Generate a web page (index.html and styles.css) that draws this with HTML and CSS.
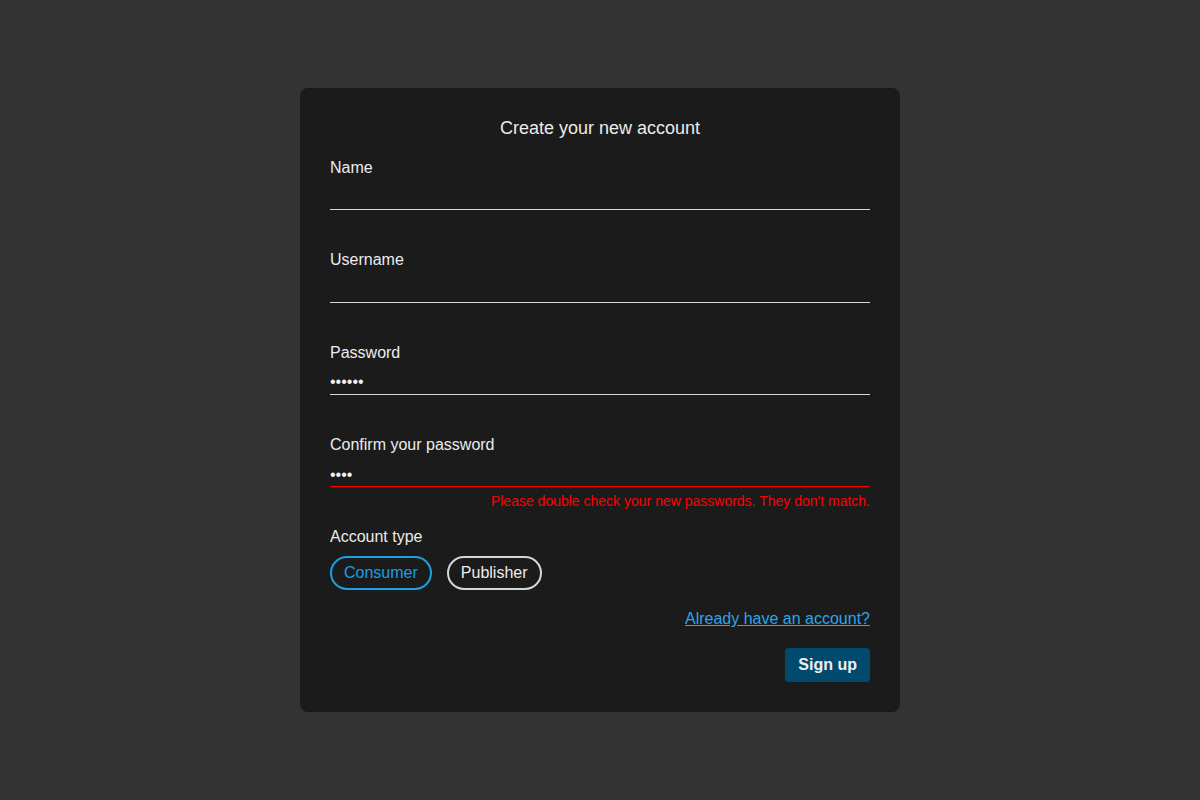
FILE: index.html
```html
<!DOCTYPE html>
<html lang="en">
<head>
<meta charset="utf-8">
<title>Create your new account</title>
<link rel="stylesheet" href="styles.css">
</head>
<body>
<main class="page">
  <form class="card">
    <h1 class="title">Create your new account</h1>
    <div class="field">
      <label class="label" for="name">Name</label>
      <div class="control"><input class="input" id="name" type="text"></div>
    </div>
    <div class="field">
      <label class="label" for="username">Username</label>
      <div class="control"><input class="input" id="username" type="text"></div>
    </div>
    <div class="field">
      <label class="label" for="password">Password</label>
      <div class="control"><input class="input" id="password" type="password" value="123456"></div>
    </div>
    <div class="field field-error">
      <label class="label" for="confirm">Confirm your password</label>
      <div class="control control-error"><input class="input" id="confirm" type="password" value="1234"></div>
      <p class="error">Please double check your new passwords. They don't match.</p>
    </div>
    <div class="account-type">
      <span class="label">Account type</span>
      <div class="pills">
        <button type="button" class="pill pill-active">Consumer</button>
        <button type="button" class="pill">Publisher</button>
      </div>
    </div>
    <div class="link-row"><a class="link" href="#">Already have an account?</a></div>
    <div class="actions"><button type="submit" class="submit">Sign up</button></div>
  </form>
</main>
</body>
</html>
```
FILE: styles.css
```css
html, body {
  margin: 0;
  padding: 0;
  background: #333333;
  font-family: "Liberation Sans", Arial, sans-serif;
  color: #ececec;
}
.page {
  width: 1200px;
  height: 800px;
  display: flex;
  justify-content: center;
  align-items: flex-start;
}
.card {
  margin-top: 88px;
  width: 540px;
  padding: 30px;
  background: #1b1b1b;
  border-radius: 8px;
  display: flex;
  flex-direction: column;
}
.title {
  margin: 0 0 21px;
  font-size: 18px;
  font-weight: normal;
  line-height: 20px;
  text-align: center;
  color: #ececec;
}
.field {
  display: flex;
  flex-direction: column;
  margin-bottom: 40.94px;
}
.field.field-error {
  margin-bottom: 19.5px;
}
.label {
  font-size: 16px;
  line-height: 18px;
  color: #ececec;
}
.control {
  margin-top: 9px;
  height: 23.4px;
  border-bottom: 1px solid #d6d6d6;
  display: flex;
}
.control.control-error {
  border-bottom-color: #ff0000;
}
.input {
  flex: 1;
  min-width: 0;
  height: 100%;
  box-sizing: border-box;
  padding: 0;
  margin: 0;
  border: 0;
  background: transparent;
  color: #f0f0f0;
  font-family: "Liberation Sans", Arial, sans-serif;
  font-size: 16px;
  outline: none;
}
.error {
  margin: 5.5px 0 0;
  font-size: 14px;
  line-height: 16px;
  color: #ff0000;
  text-align: right;
}
.account-type {
  display: flex;
  flex-direction: column;
}
.pills {
  display: flex;
  gap: 15px;
  margin-top: 10px;
}
.pill {
  font-family: "Liberation Sans", Arial, sans-serif;
  font-size: 16px;
  line-height: 18px;
  padding: 6px 12px;
  background: transparent;
  color: #ececec;
  border: 2px solid #d6d6d6;
  border-radius: 17px;
  cursor: pointer;
}
.pill-active {
  color: #1a9fe3;
  border-color: #1a9fe3;
}
.link-row {
  display: flex;
  justify-content: flex-end;
  margin-top: 20px;
}
.link {
  font-size: 16px;
  line-height: 18px;
  color: #2ba6ec;
  text-decoration: underline;
}
.actions {
  display: flex;
  justify-content: flex-end;
  margin-top: 20px;
}
.submit {
  font-family: "Liberation Sans", Arial, sans-serif;
  font-size: 16px;
  font-weight: bold;
  line-height: 18px;
  color: #eeeeee;
  background: #004a6d;
  border: 0;
  border-radius: 4px;
  padding: 8px 13px;
  cursor: pointer;
}
```
